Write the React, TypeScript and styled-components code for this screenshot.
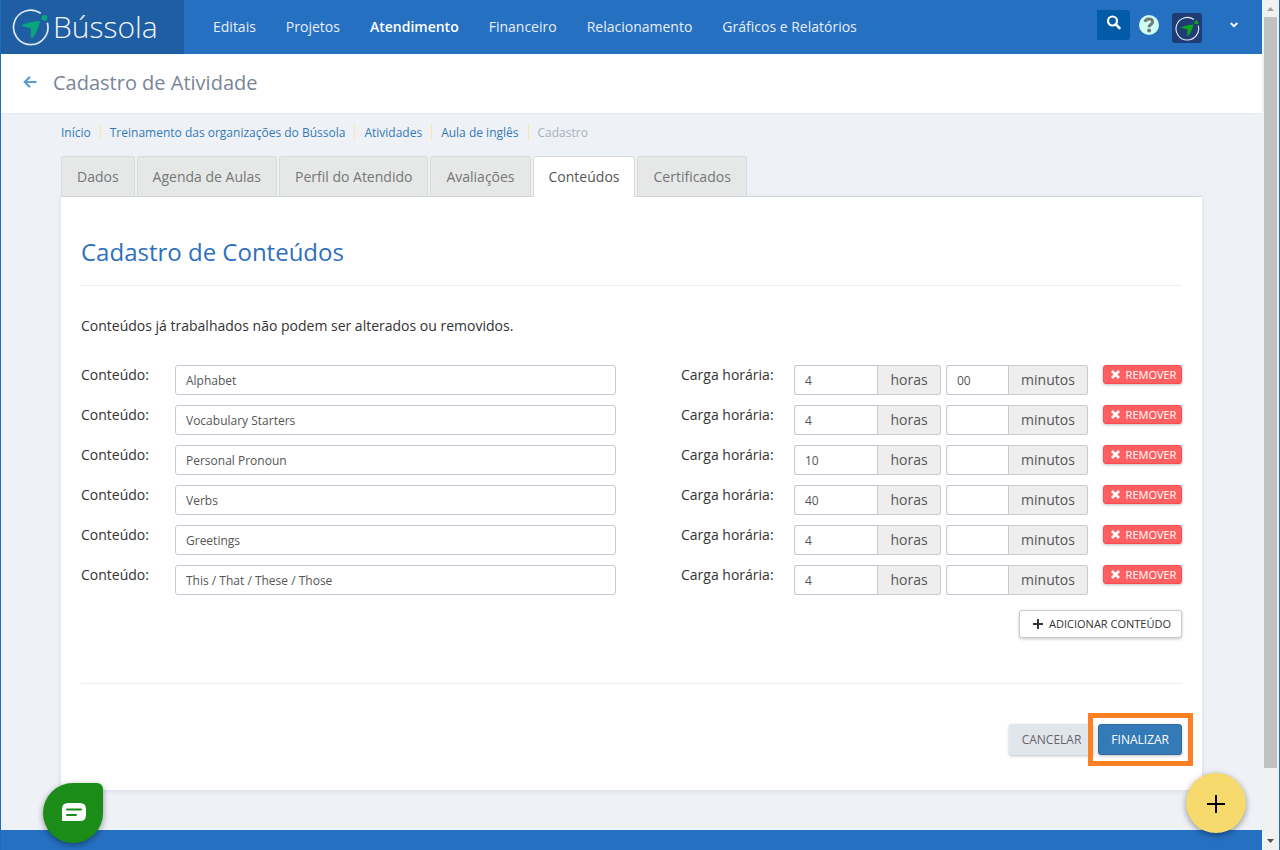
import React from 'react';
import styled, { createGlobalStyle, css } from 'styled-components';

const GlobalStyle = createGlobalStyle`
  *, *::before, *::after { box-sizing: border-box; }
  body {
    margin: 0;
    background: #eef1f6;
    color: #333;
    font-family: 'Open Sans', 'Liberation Sans', sans-serif;
    font-size: 14px;
    line-height: 20px;
  }
  button, input { font-family: inherit; }
  a { text-decoration: none; }
`;

const Frame = styled.div`
  display: flex;
  min-height: 100vh;
  border: solid #1a6fb8;
  border-width: 0 1px 1px;
`;

const Page = styled.div`
  position: relative;
  flex: 1;
  min-width: 0;
  display: flex;
  flex-direction: column;
`;

const Header = styled.header`
  display: flex;
  height: 54px;
  background: #2670c2;
`;

const Brand = styled.a`
  display: flex;
  align-items: center;
  gap: 3px;
  width: 183px;
  padding-left: 11px;
  background: #1f5ea2;
  color: #f0f5fb;
  font-size: 30px;
  font-weight: 300;
  line-height: 54px;
`;

const Nav = styled.nav`
  display: flex;
  align-items: center;
  gap: 30px;
  padding-left: 29px;
`;

const NavLink = styled.a<{ $active?: boolean }>`
  color: ${({ $active }) => ($active ? '#fff' : '#e8eef6')};
  font-size: 14px;
  font-weight: ${({ $active }) => ($active ? 600 : 500)};
  white-space: nowrap;
`;

const HeaderTools = styled.div`
  display: flex;
  align-items: flex-start;
  margin-left: auto;
  padding: 10px 16px 0 0;
`;

const toolReset = css`
  display: flex;
  justify-content: center;
  padding: 0;
  border: 0;
  cursor: pointer;
`;

const SearchButton = styled.button`
  ${toolReset}
  width: 33px;
  height: 30px;
  padding-top: 5px;
  border-radius: 0 3px 3px 0;
  background: #025ba7;
`;

const HelpButton = styled.button`
  ${toolReset}
  align-items: center;
  width: 20px;
  height: 20px;
  margin: 5px 13px 0 9px;
  border-radius: 50%;
  background: #ccfff2;
`;

const AvatarButton = styled.button`
  ${toolReset}
  align-items: center;
  width: 30px;
  height: 30px;
  margin-top: 3px;
  border-radius: 3px;
  background: #203c74;
`;

const CaretButton = styled.button`
  ${toolReset}
  align-items: center;
  width: 24px;
  height: 30px;
  margin-left: 20px;
  background: transparent;
`;

const TitleBar = styled.div`
  display: flex;
  align-items: center;
  gap: 16px;
  height: 60px;
  padding: 0 22px 2px;
  border-bottom: 1px solid #e4eaf0;
  background: #fff;
`;

const BackLink = styled.a`
  display: flex;
  height: 14px;
`;

const PageTitle = styled.h1`
  margin: 0;
  color: #798599;
  font-size: 20px;
  font-weight: 400;
  line-height: 28px;
`;

const Content = styled.main`
  flex: 1;
  padding: 10px 60px 40px;
`;

const Crumbs = styled.ol`
  display: flex;
  margin: 0;
  padding: 0;
  list-style: none;
`;

const Crumb = styled.li`
  height: 17px;
  font-size: 12px;
  line-height: 17px;
  color: #a9b1bc;
  a { color: #337ab7; }
  & + & {
    margin-left: 9px;
    padding-left: 9px;
    border-left: 1px solid #fce7a5;
  }
`;

const Tabs = styled.nav`
  display: flex;
  gap: 2px;
  margin-top: 15px;
  border-bottom: 1px solid #d8dadd;
`;

const Tab = styled.a<{ $active?: boolean }>`
  height: ${({ $active }) => ($active ? 41 : 40)}px;
  margin-bottom: ${({ $active }) => ($active ? -1 : 0)}px;
  padding: 10px 15px;
  border: 1px solid #d8dadd;
  border-bottom: 0;
  border-radius: 3px 3px 0 0;
  background: ${({ $active }) => ($active ? '#fff' : '#e6e8e7')};
  color: ${({ $active }) => ($active ? '#555' : '#777')};
  white-space: nowrap;
`;

const Card = styled.section`
  padding: 35px 20px;
  border-radius: 0 0 3px 3px;
  background: #fff;
  box-shadow: 0 1px 5px rgba(69, 90, 120, 0.13);
`;

const SectionTitle = styled.h2`
  margin: 0;
  padding-bottom: 13px;
  border-bottom: 1px solid #eee;
  color: #2e70bd;
  font-size: 24px;
  font-weight: 400;
  line-height: 40px;
`;

const Note = styled.p`
  margin: 30px 0 29px;
`;

const Rows = styled.div`
  display: grid;
  gap: 10px;
`;

const FormRow = styled.div`
  display: flex;
  align-items: flex-start;
`;

const NameField = styled.div`
  display: grid;
  flex: 1;
  grid-template-columns: 94px 1fr;
  margin-right: 65px;
`;

const LoadField = styled.div`
  display: flex;
  gap: 5px;
  margin-right: 15px;
`;

const LoadLabel = styled.label`
  width: 108px;
`;

const TextInput = styled.input`
  width: 100%;
  min-width: 0;
  height: 30px;
  padding: 1px 10px 0;
  border: 1px solid #c2cad8;
  border-radius: 3px;
  background: #fff;
  color: #555;
  font-size: 12px;
`;

const Group = styled.div<{ $width: number }>`
  display: flex;
  width: ${({ $width }) => $width}px;
  ${TextInput} {
    flex: 1;
    border-right: 0;
    border-radius: 3px 0 0 3px;
  }
`;

const Addon = styled.span<{ $width: number }>`
  width: ${({ $width }) => $width}px;
  border: 1px solid #ccc;
  border-left-color: #c2cad8;
  border-radius: 0 3px 3px 0;
  background: #eee;
  color: #555;
  line-height: 28px;
  text-align: center;
`;

const buttonBase = css`
  display: flex;
  align-items: center;
  justify-content: center;
  padding: 0;
  border: 1px solid;
  border-radius: 3px;
  text-transform: uppercase;
  white-space: nowrap;
  box-shadow: 0 1px 3px rgba(0, 0, 0, 0.25);
  cursor: pointer;
`;

const RemoveButton = styled.button`
  ${buttonBase}
  gap: 6px;
  width: 79px;
  height: 19px;
  padding-left: 2px;
  border-color: #fb4c50;
  background: #ff5f62;
  color: #fff;
  font-size: 11px;
  line-height: 17px;
`;

const AddButton = styled.button`
  ${buttonBase}
  gap: 6px;
  height: 28px;
  margin: 15px 0 0 auto;
  padding: 0 10px 1px 13px;
  border-color: #ccc;
  background: #fff;
  color: #333;
  font-size: 11px;
  line-height: 15px;
`;

const Actions = styled.div`
  display: flex;
  justify-content: flex-end;
  gap: 4px;
  margin-top: 45px;
  padding-top: 40px;
  border-top: 1px solid #eee;
`;

const ActionButton = styled.button<{ $primary?: boolean }>`
  ${buttonBase}
  height: 31px;
  padding: 0 12px;
  border-color: ${({ $primary }) => ($primary ? '#2e6da4' : '#e1e5ec')};
  background: ${({ $primary }) => ($primary ? '#337ab7' : '#e1e5ec')};
  color: ${({ $primary }) => ($primary ? '#fff' : '#666')};
  font-size: 12px;
`;

const Highlight = styled.div`
  position: relative;
  &::after {
    content: '';
    position: absolute;
    inset: -11px -11px -11px -10px;
    border: 5px solid #ff8022;
    pointer-events: none;
  }
`;

const Footer = styled.footer`
  height: 20px;
  background: #2670c2;
`;

const floating = css`
  position: absolute;
  display: flex;
  align-items: center;
  justify-content: center;
  width: 60px;
  height: 60px;
  padding: 0;
  border: 0;
  box-shadow: 0 2px 6px rgba(0, 0, 0, 0.4);
  cursor: pointer;
`;

const ChatButton = styled.button`
  ${floating}
  left: 42px;
  bottom: 7px;
  padding: 0 0 2px 2px;
  border-radius: 30px 6px 30px 30px;
  background: #1b8c17;
`;

const NewButton = styled.button`
  ${floating}
  right: 16px;
  bottom: 17px;
  padding-top: 2px;
  border-radius: 50%;
  background: #f6da6e;
`;

const Scrollbar = styled.div`
  display: flex;
  flex-direction: column;
  align-items: center;
  width: 17px;
  padding-right: 1px;
  background: #f1f1f1;
`;

const ScrollArrow = styled.svg`
  flex: none;
  width: 17px;
  height: 17px;
`;

const ScrollTrack = styled.div`
  flex: 1;
  width: 13px;
`;

const ScrollThumb = styled.div`
  height: 92%;
  background: #c1c1c1;
`;

type CompassProps = { size: number; ring: string; green: string; stroke: number };

function Compass({ size, ring, green, stroke }: CompassProps) {
  return (
    <svg width={size} height={size} viewBox="0 0 38 38" fill="none" aria-hidden="true">
      <path d="M28.8 5.400A17.200 17.200 0 1 0 35.300 14.700" stroke={ring} strokeWidth={stroke} />
      <circle cx="32.500" cy="9.800" r="2.900" fill={green} />
      <path d="M28 13C23 13 16 14.300 10.400 16.800c-1 .6-.7 1.700.4 1.800l8 1.600-.1 8.700c0 1.500 1.400 2 2.200.8C24 25.200 27 19.200 28 13Z" fill={green} />
    </svg>
  );
}

const navItems = ['Editais', 'Projetos', 'Atendimento', 'Financeiro', 'Relacionamento', 'Gráficos e Relatórios'];
const crumbs = ['Início', 'Treinamento das organizações do Bússola', 'Atividades', 'Aula de inglês'];
const tabs = ['Dados', 'Agenda de Aulas', 'Perfil do Atendido', 'Avaliações', 'Conteúdos', 'Certificados'];
const contents = [
  { name: 'Alphabet', hours: '4', minutes: '00' },
  { name: 'Vocabulary Starters', hours: '4', minutes: '' },
  { name: 'Personal Pronoun', hours: '10', minutes: '' },
  { name: 'Verbs', hours: '40', minutes: '' },
  { name: 'Greetings', hours: '4', minutes: '' },
  { name: 'This / That / These / Those', hours: '4', minutes: '' },
];

export default function App() {
  return (
    <>
      <GlobalStyle />
      <Frame>
        <Page>
          <Header>
            <Brand href="#">
              <Compass size={38} ring="#dce8f5" green="#08a67c" stroke={1.7} />
              Bússola
            </Brand>
            <Nav aria-label="Principal">
              {navItems.map((item) => (
                <NavLink key={item} href="#" $active={item === 'Atendimento'}>{item}</NavLink>
              ))}
            </Nav>
            <HeaderTools>
              <SearchButton aria-label="Buscar">
                <svg width="15" height="15" viewBox="0 0 15 15" fill="none" stroke="#fff" aria-hidden="true">
                  <circle cx="6.5" cy="6" r="4.5" strokeWidth="2.2" />
                  <path d="M9.8 9.3L13.4 13" strokeWidth="2.6" strokeLinecap="round" />
                </svg>
              </SearchButton>
              <HelpButton aria-label="Ajuda">
                <svg width="12" height="16" viewBox="0 0 12 16" fill="none" aria-hidden="true">
                  <path d="M2 4.800C3 .8 9.800 1 9.600 5c-.1 2.600-3.500 2.400-3.500 5.200" stroke="#777" strokeWidth="3" />
                  <circle cx="6.100" cy="13.500" r="2" fill="#777" />
                </svg>
              </HelpButton>
              <AvatarButton aria-label="Perfil">
                <Compass size={25} ring="#e6ebf5" green="#0ca51e" stroke={1.7} />
              </AvatarButton>
              <CaretButton aria-label="Abrir menu">
                <svg width="8" height="6" viewBox="0 0 8 6" fill="none" stroke="#fff" strokeWidth="1.8" aria-hidden="true">
                  <path d="M.7 1L4 4.2 7.3 1" />
                </svg>
              </CaretButton>
            </HeaderTools>
          </Header>

          <TitleBar>
            <BackLink href="#" aria-label="Voltar">
              <svg width="14" height="12" viewBox="0 0 14 12" fill="none" stroke="#5b9bd8" strokeWidth="2.2" aria-hidden="true">
                <path d="M1.5 6H13.5M7 .8L1.8 6 7 11.2" />
              </svg>
            </BackLink>
            <PageTitle>Cadastro de Atividade</PageTitle>
          </TitleBar>

          <Content>
            <Crumbs>
              {crumbs.map((crumb) => (
                <Crumb key={crumb}><a href="#">{crumb}</a></Crumb>
              ))}
              <Crumb>Cadastro</Crumb>
            </Crumbs>
            <Tabs aria-label="Seções">
              {tabs.map((tab) => (
                <Tab key={tab} href="#" $active={tab === 'Conteúdos'}>{tab}</Tab>
              ))}
            </Tabs>
            <Card>
              <SectionTitle>Cadastro de Conteúdos</SectionTitle>
              <Note>Conteúdos já trabalhados não podem ser alterados ou removidos.</Note>
              <Rows>
                {contents.map((row, i) => (
                  <FormRow key={row.name}>
                    <NameField>
                      <label htmlFor={`name-${i}`}>Conteúdo:</label>
                      <TextInput id={`name-${i}`} defaultValue={row.name} />
                    </NameField>
                    <LoadField>
                      <LoadLabel htmlFor={`hours-${i}`}>Carga horária:</LoadLabel>
                      <Group $width={147}>
                        <TextInput id={`hours-${i}`} defaultValue={row.hours} />
                        <Addon $width={64}>horas</Addon>
                      </Group>
                      <Group $width={142}>
                        <TextInput aria-label="Minutos" defaultValue={row.minutes} />
                        <Addon $width={80}>minutos</Addon>
                      </Group>
                    </LoadField>
                    <RemoveButton type="button">
                      <svg width="9" height="9" viewBox="0 0 9 9" stroke="#fff" strokeWidth="2.6" aria-hidden="true">
                        <path d="M1 1L8 8M8 1L1 8" />
                      </svg>
                      Remover
                    </RemoveButton>
                  </FormRow>
                ))}
              </Rows>
              <AddButton type="button">
                <svg width="10" height="10" viewBox="0 0 10 10" stroke="#333" strokeWidth="2" aria-hidden="true">
                  <path d="M5 0V10M0 5H10" />
                </svg>
                Adicionar Conteúdo
              </AddButton>
              <Actions>
                <ActionButton type="button">Cancelar</ActionButton>
                <Highlight>
                  <ActionButton type="submit" $primary>Finalizar</ActionButton>
                </Highlight>
              </Actions>
            </Card>
          </Content>

          <Footer />
          <ChatButton aria-label="Conversar">
            <svg width="24" height="18" viewBox="0 0 24 18" aria-hidden="true">
              <path d="M6 0H18Q24 0 24 6V12Q24 18 18 18H0V6Q0 0 6 0Z" fill="#fff" />
              <path d="M5 6.5H19M5 12H14" stroke="#1b8c17" strokeWidth="2" strokeLinecap="round" />
            </svg>
          </ChatButton>
          <NewButton aria-label="Adicionar">
            <svg width="18" height="18" viewBox="0 0 18 18" stroke="#000" strokeWidth="2" aria-hidden="true">
              <path d="M9 0V18M0 9H18" />
            </svg>
          </NewButton>
        </Page>
        <Scrollbar aria-hidden="true">
          <ScrollArrow viewBox="0 0 17 17"><path d="M5 11L8.500 7 12 11Z" fill="#a3a3a3" /></ScrollArrow>
          <ScrollTrack><ScrollThumb /></ScrollTrack>
          <ScrollArrow viewBox="0 0 17 17"><path d="M5 6L8.500 10 12 6Z" fill="#505050" /></ScrollArrow>
        </Scrollbar>
      </Frame>
    </>
  );
}
